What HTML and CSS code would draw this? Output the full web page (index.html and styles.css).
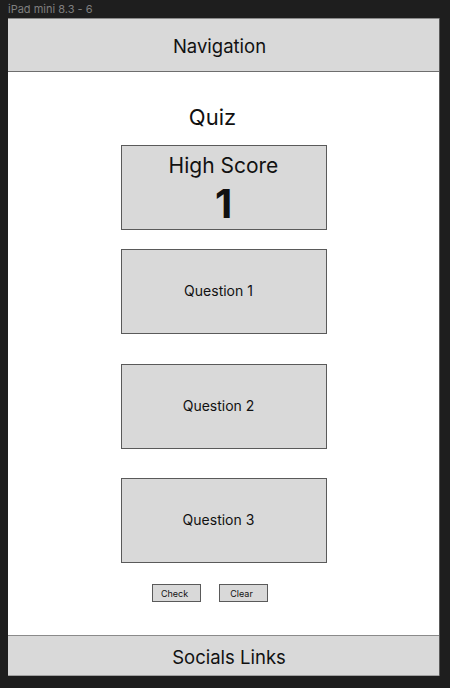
FILE: index.html
```html
<!DOCTYPE html>
<html>
<head>
<meta charset="utf-8">
<link rel="stylesheet" href="styles.css">
</head>
<body>
<div class="label">iPad mini 8.3 - 6</div>
<div class="frame">
  <header class="nav">Navigation</header>
  <main class="main">
    <h1 class="title">Quiz</h1>
    <div class="box score">
      <div class="score-label">High Score</div>
      <div class="score-value">1</div>
    </div>
    <div class="box q q1">Question 1</div>
    <div class="box q q2">Question 2</div>
    <div class="box q q3">Question 3</div>
    <div class="buttons">
      <button class="btn">Check</button>
      <button class="btn">Clear</button>
    </div>
  </main>
  <footer class="footer">Socials Links</footer>
</div>
</body>
</html>
```
FILE: styles.css
```css
html, body {
  margin: 0;
  padding: 0;
  background: #1e1e1e;
  font-family: Inter, "Noto Sans", sans-serif;
}
.label {
  height: 18px;
  padding-left: 8px;
  font-size: 11px;
  line-height: 18px;
  color: #7f7f7f;
}
.frame {
  margin-left: 8px;
  width: 431px;
  height: 658px;
  background: #fff;
  border-right: 1px solid #5a5a5a;
  display: flex;
  flex-direction: column;
}
.nav {
  box-sizing: border-box;
  height: 54px;
  padding: 2px 8px 0 0;
  background: #d9d9d9;
  border-top: 1px solid #8a8a8a;
  border-bottom: 1px solid #6e6e6e;
  display: flex;
  align-items: center;
  justify-content: center;
  font-size: 18.5px;
  color: #111;
}
.main {
  flex: 1;
  display: flex;
  flex-direction: column;
  align-items: center;
}
.title {
  margin: 32px 22px 0 0;
  font-size: 22px;
  line-height: 26px;
  font-weight: 400;
  color: #111;
}
.box {
  box-sizing: border-box;
  width: 206px;
  height: 85px;
  background: #d9d9d9;
  border: 1px solid #5a5a5a;
  color: #111;
}
.score {
  margin-top: 15px;
  display: flex;
  flex-direction: column;
  align-items: center;
}
.score-label {
  margin-top: 7px;
  font-size: 21px;
  line-height: 26px;
}
.score-value {
  margin-top: 3px;
  font-size: 40px;
  line-height: 44px;
  font-weight: 700;
}
.q {
  padding: 0 10px 2px 0;
  display: flex;
  align-items: center;
  justify-content: center;
  font-size: 14px;
}
.q1 { margin-top: 19px; }
.q2 { margin-top: 30px; }
.q3 { margin-top: 29px; }
.buttons {
  margin-top: 21px;
  margin-right: 27px;
  display: flex;
  gap: 18px;
}
.btn {
  box-sizing: border-box;
  width: 49px;
  height: 18px;
  padding: 0 4px 0 0;
  background: #d9d9d9;
  border: 1px solid #5a5a5a;
  border-radius: 0;
  font-family: Inter, "Noto Sans", sans-serif;
  font-size: 9px;
  color: #111;
}
.footer {
  box-sizing: border-box;
  height: 41px;
  padding: 2px 0 0 11px;
  background: #d9d9d9;
  border-top: 1px solid #8a8a8a;
  border-bottom: 1px solid #a0a0a0;
  display: flex;
  align-items: center;
  justify-content: center;
  font-size: 18.5px;
  color: #111;
}
```
